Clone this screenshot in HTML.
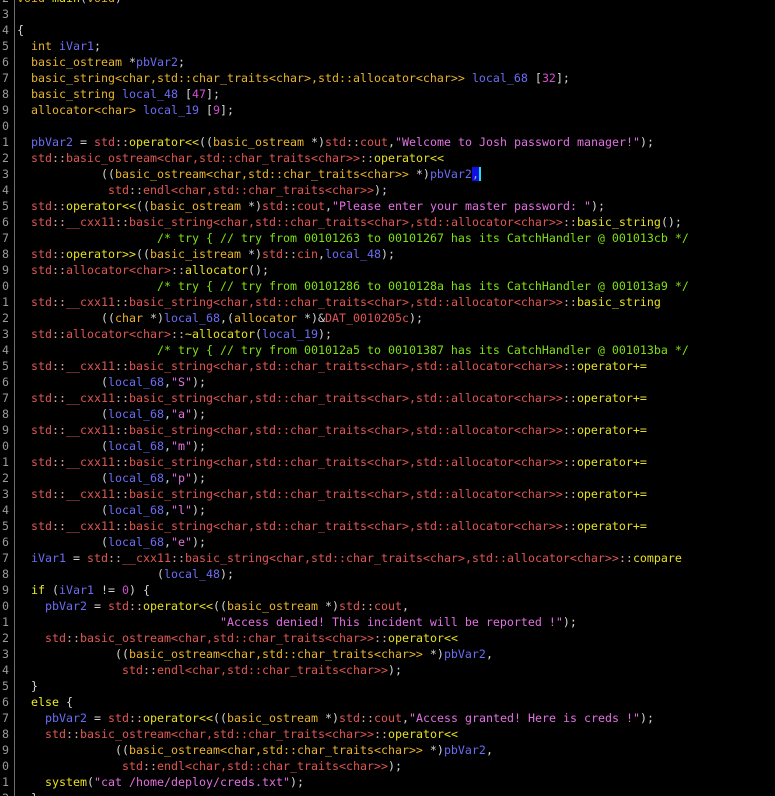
<!DOCTYPE html>
<html><head><meta charset="utf-8"><style>
html,body{margin:0;padding:0;background:#000;width:775px;height:796px;overflow:hidden}
#w{position:relative;width:775px;height:796px;overflow:hidden;background:#000}
#sep{position:absolute;left:14px;top:0;width:1px;height:796px;background:#6e6e6e}
pre{margin:0;position:absolute;top:-10px;font-family:"DejaVu Sans Mono","Liberation Mono",monospace;font-size:11.63px;line-height:16px;color:#d4d4d4;white-space:pre}
#g{left:2px;color:#9a9a9a}
#c{left:17px}
.t{color:#e8b42c}.f{color:#e6e020}.n{color:#e05656}.v{color:#6c6cf4}.s{color:#e270e2}.c{color:#80e010}.k{color:#d24ed2}.y{color:#ecec20}.p{color:#d0a8a8}
.cur{background:#1010e0;color:#a0a0ff;box-shadow:2px 0 0 #20e0f0}
</style></head><body><div id="w"><div id="sep"></div>
<pre id="g">2
3
4
5
6
7
8
9
0
1
2
3
4
5
6
7
8
9
0
1
2
3
4
5
6
7
8
9
0
1
2
3
4
5
6
7
8
9
0
1
2
3
4
5
6
7
8
9
0
1
2</pre>
<pre id="c"><span class="t">void</span> <span class="f">main</span>(<span class="t">void</span>)

{
  <span class="t">int</span> <span class="v">iVar1</span>;
  <span class="t">basic_ostream</span> *<span class="v">pbVar2</span>;
  <span class="t">basic_string&lt;char,std::char_traits&lt;char&gt;,std::allocator&lt;char&gt;&gt;</span> <span class="v">local_68</span> [<span class="k">32</span>];
  <span class="t">basic_string</span> <span class="v">local_48</span> [<span class="k">47</span>];
  <span class="t">allocator&lt;char&gt;</span> <span class="v">local_19</span> [<span class="k">9</span>];

  <span class="v">pbVar2</span> = <span class="n">std</span><span class="p">::</span><span class="f">operator&lt;&lt;</span>((<span class="t">basic_ostream</span> *)<span class="n">std</span><span class="p">::</span><span class="n">cout</span>,<span class="s">"Welcome to Josh password manager!"</span>);
  <span class="n">std</span><span class="p">::</span><span class="n">basic_ostream&lt;char,std::char_traits&lt;char&gt;&gt;</span><span class="p">::</span><span class="f">operator&lt;&lt;</span>
            ((<span class="t">basic_ostream&lt;char,std::char_traits&lt;char&gt;&gt;</span> *)<span class="v">pbVar2</span><span class="cur">,</span>
             <span class="n">std</span><span class="p">::</span><span class="n">endl&lt;char,std::char_traits&lt;char&gt;&gt;</span>);
  <span class="n">std</span><span class="p">::</span><span class="f">operator&lt;&lt;</span>((<span class="t">basic_ostream</span> *)<span class="n">std</span><span class="p">::</span><span class="n">cout</span>,<span class="s">"Please enter your master password: "</span>);
  <span class="n">std</span><span class="p">::</span><span class="n">__cxx11</span><span class="p">::</span><span class="n">basic_string&lt;char,std::char_traits&lt;char&gt;,std::allocator&lt;char&gt;&gt;</span><span class="p">::</span><span class="f">basic_string</span>();
                    <span class="c">/* try { // try from 00101263 to 00101267 has its CatchHandler @ 001013cb */</span>
  <span class="n">std</span><span class="p">::</span><span class="f">operator&gt;&gt;</span>((<span class="t">basic_istream</span> *)<span class="n">std</span><span class="p">::</span><span class="n">cin</span>,<span class="v">local_48</span>);
  <span class="n">std</span><span class="p">::</span><span class="n">allocator&lt;char&gt;</span><span class="p">::</span><span class="f">allocator</span>();
                    <span class="c">/* try { // try from 00101286 to 0010128a has its CatchHandler @ 001013a9 */</span>
  <span class="n">std</span><span class="p">::</span><span class="n">__cxx11</span><span class="p">::</span><span class="n">basic_string&lt;char,std::char_traits&lt;char&gt;,std::allocator&lt;char&gt;&gt;</span><span class="p">::</span><span class="f">basic_string</span>
            ((<span class="t">char</span> *)<span class="v">local_68</span>,(<span class="t">allocator</span> *)&amp;<span class="n">DAT_0010205c</span>);
  <span class="n">std</span><span class="p">::</span><span class="n">allocator&lt;char&gt;</span><span class="p">::</span><span class="f">~allocator</span>(<span class="v">local_19</span>);
                    <span class="c">/* try { // try from 001012a5 to 00101387 has its CatchHandler @ 001013ba */</span>
  <span class="n">std</span><span class="p">::</span><span class="n">__cxx11</span><span class="p">::</span><span class="n">basic_string&lt;char,std::char_traits&lt;char&gt;,std::allocator&lt;char&gt;&gt;</span><span class="p">::</span><span class="f">operator+=</span>
            (<span class="v">local_68</span>,<span class="s">"S"</span>);
  <span class="n">std</span><span class="p">::</span><span class="n">__cxx11</span><span class="p">::</span><span class="n">basic_string&lt;char,std::char_traits&lt;char&gt;,std::allocator&lt;char&gt;&gt;</span><span class="p">::</span><span class="f">operator+=</span>
            (<span class="v">local_68</span>,<span class="s">"a"</span>);
  <span class="n">std</span><span class="p">::</span><span class="n">__cxx11</span><span class="p">::</span><span class="n">basic_string&lt;char,std::char_traits&lt;char&gt;,std::allocator&lt;char&gt;&gt;</span><span class="p">::</span><span class="f">operator+=</span>
            (<span class="v">local_68</span>,<span class="s">"m"</span>);
  <span class="n">std</span><span class="p">::</span><span class="n">__cxx11</span><span class="p">::</span><span class="n">basic_string&lt;char,std::char_traits&lt;char&gt;,std::allocator&lt;char&gt;&gt;</span><span class="p">::</span><span class="f">operator+=</span>
            (<span class="v">local_68</span>,<span class="s">"p"</span>);
  <span class="n">std</span><span class="p">::</span><span class="n">__cxx11</span><span class="p">::</span><span class="n">basic_string&lt;char,std::char_traits&lt;char&gt;,std::allocator&lt;char&gt;&gt;</span><span class="p">::</span><span class="f">operator+=</span>
            (<span class="v">local_68</span>,<span class="s">"l"</span>);
  <span class="n">std</span><span class="p">::</span><span class="n">__cxx11</span><span class="p">::</span><span class="n">basic_string&lt;char,std::char_traits&lt;char&gt;,std::allocator&lt;char&gt;&gt;</span><span class="p">::</span><span class="f">operator+=</span>
            (<span class="v">local_68</span>,<span class="s">"e"</span>);
  <span class="v">iVar1</span> = <span class="n">std</span><span class="p">::</span><span class="n">__cxx11</span><span class="p">::</span><span class="n">basic_string&lt;char,std::char_traits&lt;char&gt;,std::allocator&lt;char&gt;&gt;</span><span class="p">::</span><span class="f">compare</span>
                    (<span class="v">local_48</span>);
  <span class="y">if</span> (<span class="v">iVar1</span> != <span class="k">0</span>) {
    <span class="v">pbVar2</span> = <span class="n">std</span><span class="p">::</span><span class="f">operator&lt;&lt;</span>((<span class="t">basic_ostream</span> *)<span class="n">std</span><span class="p">::</span><span class="n">cout</span>,
                             <span class="s">"Access denied! This incident will be reported !"</span>);
    <span class="n">std</span><span class="p">::</span><span class="n">basic_ostream&lt;char,std::char_traits&lt;char&gt;&gt;</span><span class="p">::</span><span class="f">operator&lt;&lt;</span>
              ((<span class="t">basic_ostream&lt;char,std::char_traits&lt;char&gt;&gt;</span> *)<span class="v">pbVar2</span>,
               <span class="n">std</span><span class="p">::</span><span class="n">endl&lt;char,std::char_traits&lt;char&gt;&gt;</span>);
  }
  <span class="y">else</span> {
    <span class="v">pbVar2</span> = <span class="n">std</span><span class="p">::</span><span class="f">operator&lt;&lt;</span>((<span class="t">basic_ostream</span> *)<span class="n">std</span><span class="p">::</span><span class="n">cout</span>,<span class="s">"Access granted! Here is creds !"</span>);
    <span class="n">std</span><span class="p">::</span><span class="n">basic_ostream&lt;char,std::char_traits&lt;char&gt;&gt;</span><span class="p">::</span><span class="f">operator&lt;&lt;</span>
              ((<span class="t">basic_ostream&lt;char,std::char_traits&lt;char&gt;&gt;</span> *)<span class="v">pbVar2</span>,
               <span class="n">std</span><span class="p">::</span><span class="n">endl&lt;char,std::char_traits&lt;char&gt;&gt;</span>);
    <span class="f">system</span>(<span class="s">"cat /home/deploy/creds.txt"</span>);
  }</pre>
</div></body></html>
